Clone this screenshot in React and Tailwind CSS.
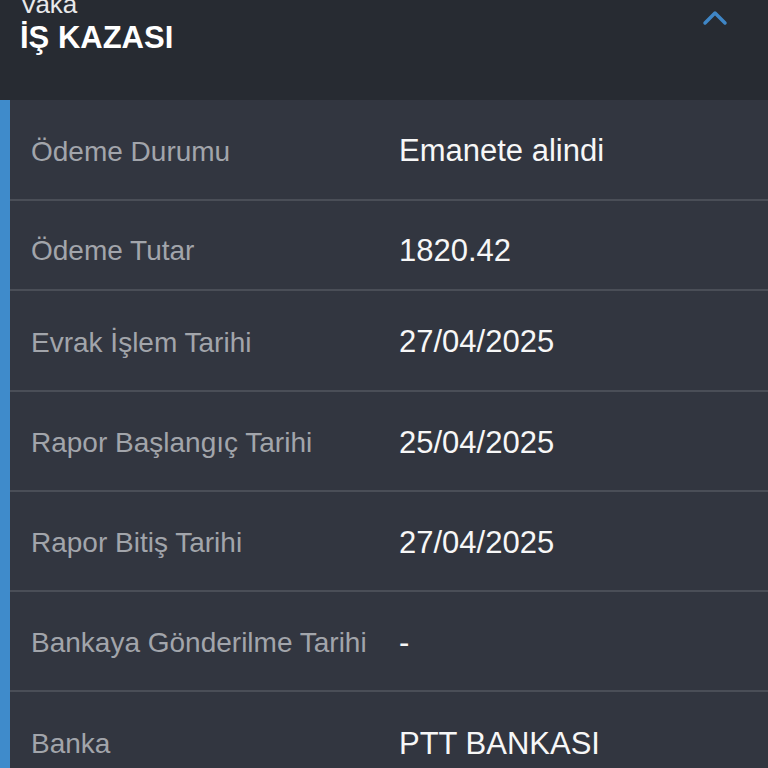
import React from 'react';

const rows = [
  { label: 'Ödeme Durumu', value: 'Emanete alindi', h: 'h-[101px] pt-[4px]' },
  { label: 'Ödeme Tutar', value: '1820.42', h: 'h-[90px] pt-[12px]' },
  { label: 'Evrak İşlem Tarihi', value: '27/04/2025', h: 'h-[101px] pt-[4px]' },
  { label: 'Rapor Başlangıç Tarihi', value: '25/04/2025', h: 'h-[100px] pt-[4px]' },
  { label: 'Rapor Bitiş Tarihi', value: '27/04/2025', h: 'h-[100px] pt-[4px]' },
  { label: 'Bankaya Gönderilme Tarihi', value: '-', h: 'h-[100px] pt-[4px]' },
  { label: 'Banka', value: 'PTT BANKASI', h: 'h-[100px] pt-[4px]' },
];

const App = () => {
  return (
    <div className="w-[768px] h-[768px] overflow-hidden bg-[#323640] font-['Liberation_Sans',Arial,sans-serif]">
      {/* Header */}
      <div className="h-[100px] bg-[#272b32] flex justify-between pl-[20px] pr-[40px] overflow-hidden">
        <div className="flex flex-col -mt-[11px]">
          <span className="text-[26px] leading-[30px] text-[#e8e9eb]">Vaka</span>
          <span className="text-[31px] leading-[36px] font-bold text-white mt-[1px]">İŞ KAZASI</span>
        </div>
        <svg width="26" height="18" viewBox="0 0 26 18" className="mt-[8px]">
          <path d="M3 15 L13 5 L23 15" fill="none" stroke="#3f86c6" strokeWidth="3.5" strokeLinecap="round" strokeLinejoin="round" />
        </svg>
      </div>

      {/* Details */}
      <div className="flex">
        <div className="w-[10px] bg-[#3f8bcb] shrink-0" />
        <div className="flex-1 flex flex-col">
          {rows.map((row, i) => (
            <div
              key={i}
              className={`${row.h} flex items-center pl-[21px] shrink-0 ${i < rows.length - 1 ? 'border-b-2 border-[#4a4e57]' : ''}`}
            >
              <span className="w-[368px] shrink-0 text-[28px] text-[#a2a5ab] whitespace-nowrap">{row.label}</span>
              <span className="text-[31px] text-[#f7f7f7] whitespace-nowrap">{row.value}</span>
            </div>
          ))}
        </div>
      </div>
    </div>
  );
};

export default App;
